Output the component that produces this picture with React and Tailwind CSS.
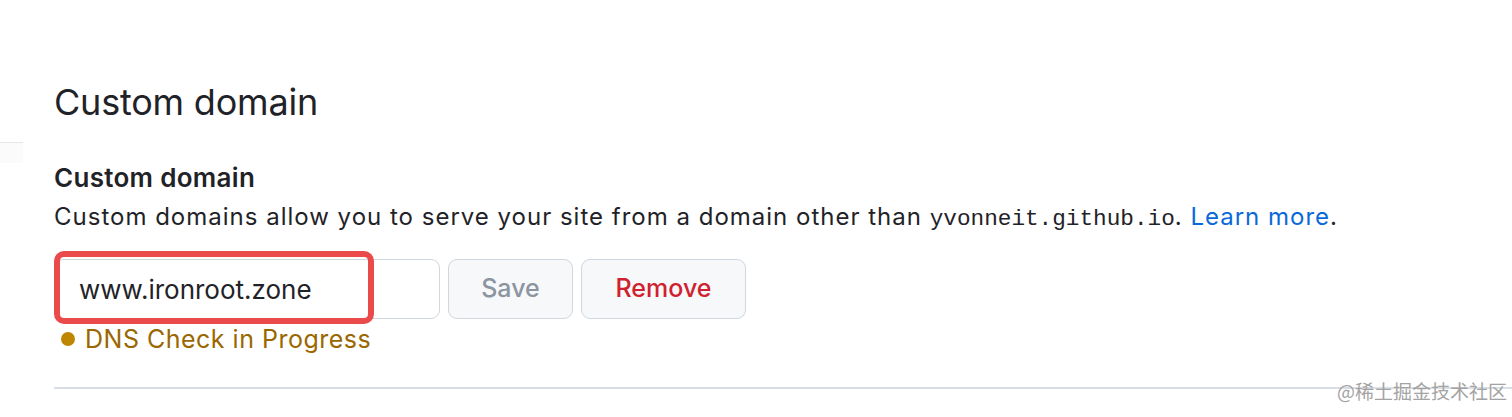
export default function App() {
  return (
    <div className="relative flex h-[417px] w-[1512px] overflow-hidden bg-white text-[#1f2328] font-['Inter',sans-serif]">
      {/* Sidebar edge */}
      <aside className="w-[23px] shrink-0 pt-[142px]">
        <div className="h-px bg-[#e6e8eb]" />
        <div className="h-[20px] bg-[#fbfbfc]" />
      </aside>

      <main className="flex-1 pl-[31px] pt-[78px]">
        <h2 className="text-[36px] leading-[48px] font-normal tracking-[-0.2px]">Custom domain</h2>

        <label className="mt-[36px] block text-[26px] leading-[32px] font-semibold tracking-[0.3px]">Custom domain</label>
        <p className="mt-[7px] text-[24px] leading-[32px] tracking-[1px]">
          Custom domains allow you to serve your site from a domain other than{" "}
          <code className="font-['Liberation_Mono',monospace] text-[22.7px] tracking-normal">yvonneit.github.io</code>.{" "}
          <a className="text-[#0969da]">Learn more</a>.
        </p>

        {/* Domain form */}
        <div className="mt-[24px] flex items-center gap-[8px]">
          <div className="relative">
            <input
              readOnly
              value="www.ironroot.zone"
              className="h-[60px] w-[386px] rounded-[9px] border border-[#d0d7de] bg-white pl-[24px] text-[26px] text-[#1f2328] outline-none"
            />
            <div className="pointer-events-none absolute left-0 top-[-8px] h-[73px] w-[320px] rounded-[10px] border-[6px] border-[#ea4a4a]" />
          </div>
          <button className="h-[60px] w-[125px] rounded-[9px] border border-[#d0d7de] bg-[#f6f8fa] text-[25px] font-medium text-[#8c959f]">
            Save
          </button>
          <button className="h-[60px] w-[165px] rounded-[9px] border border-[#d0d7de] bg-[#f6f8fa] text-[25px] font-medium text-[#cf222e]">
            Remove
          </button>
        </div>

        <div className="mt-[5px] flex items-center text-[25px] leading-[30px] tracking-[0.5px] text-[#9a6700]">
          <span className="ml-[7px] mr-[10px] h-[14px] w-[14px] rounded-full bg-[#bf8700]" />
          DNS Check in Progress
        </div>

        <div className="mt-[33px] h-[1.5px] bg-[#d8dee4]" />
      </main>

      {/* Watermark */}
      <span className="absolute left-[1337px] top-[377px] text-[19px] leading-[28px] text-[#a3a3a3] font-['Noto_Sans_CJK_SC',sans-serif]">
        @稀土掘金技术社区
      </span>
    </div>
  )
}
